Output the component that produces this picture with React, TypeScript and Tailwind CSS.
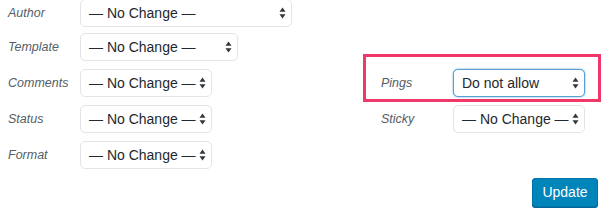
import React from 'react';

const font = { fontFamily: '"Liberation Sans", Arial, sans-serif' };

function Arrows() {
  return (
    <svg width="7" height="12" viewBox="0 0 7 12" className="shrink-0">
      <path d="M3.5 0.5 L6.5 4.8 L0.5 4.8 Z" fill="#32373c" />
      <path d="M3.5 11.5 L6.5 7.2 L0.5 7.2 Z" fill="#32373c" />
    </svg>
  );
}

function FakeSelect({ value, width, focused }: { value: string; width: string; focused?: boolean }) {
  return (
    <div
      className={`flex items-center justify-between h-[28px] pl-[8px] pr-[5px] rounded-[5px] bg-white text-[14px] text-[#23282d] ${width} ${
        focused ? 'border border-[#5b9dd9] shadow-[0_0_2px_rgba(30,140,190,0.8)]' : 'border border-[#e2e4e7]'
      }`}
    >
      <span className="whitespace-nowrap">{value}</span>
      <Arrows />
    </div>
  );
}

function Row({ label, children }: { label: string; children: React.ReactNode }) {
  return (
    <div className="flex items-center h-[28px]">
      <span className="w-[72px] shrink-0 text-[12.5px] italic text-[#555d66]">{label}</span>
      {children}
    </div>
  );
}

export default function App() {
  const noChange = '— No Change —';
  return (
    <div className="w-[607px] h-[214px] bg-white overflow-hidden" style={font}>
      <div className="flex">
        {/* left column */}
        <div className="w-[363px] shrink-0 pl-[8px] flex flex-col">
          <div className="-mt-[1px]">
            <Row label="Author">
              <FakeSelect value={noChange} width="w-[212px]" />
            </Row>
          </div>
          <div className="mt-[6px]">
            <Row label="Template">
              <FakeSelect value={noChange} width="w-[158px]" />
            </Row>
          </div>
          <div className="mt-[8px]">
            <Row label="Comments">
              <FakeSelect value={noChange} width="w-[132px]" />
            </Row>
          </div>
          <div className="mt-[8px]">
            <Row label="Status">
              <FakeSelect value={noChange} width="w-[132px]" />
            </Row>
          </div>
          <div className="mt-[8px]">
            <Row label="Format">
              <FakeSelect value={noChange} width="w-[132px]" />
            </Row>
          </div>
        </div>

        {/* right column */}
        <div className="w-[238px] shrink-0 mt-[54px] flex flex-col">
          <div className="border-[3px] border-[#f0386b] pl-[15px] pt-[12px] pb-[2px]">
            <Row label="Pings">
              <FakeSelect value="Do not allow" width="w-[132px]" focused />
            </Row>
          </div>
          <div className="pl-[18px] mt-[3px]">
            <Row label="Sticky">
              <FakeSelect value={noChange} width="w-[132px]" />
            </Row>
          </div>
        </div>
      </div>

      <div className="flex justify-end pr-[9px] mt-[9px]">
        <button className="h-[29px] w-[66px] rounded-[3px] bg-[#0085ba] border border-[#0073aa] text-white text-[14px] shadow-[0_1px_0_#006799]">
          Update
        </button>
      </div>
    </div>
  );
}
